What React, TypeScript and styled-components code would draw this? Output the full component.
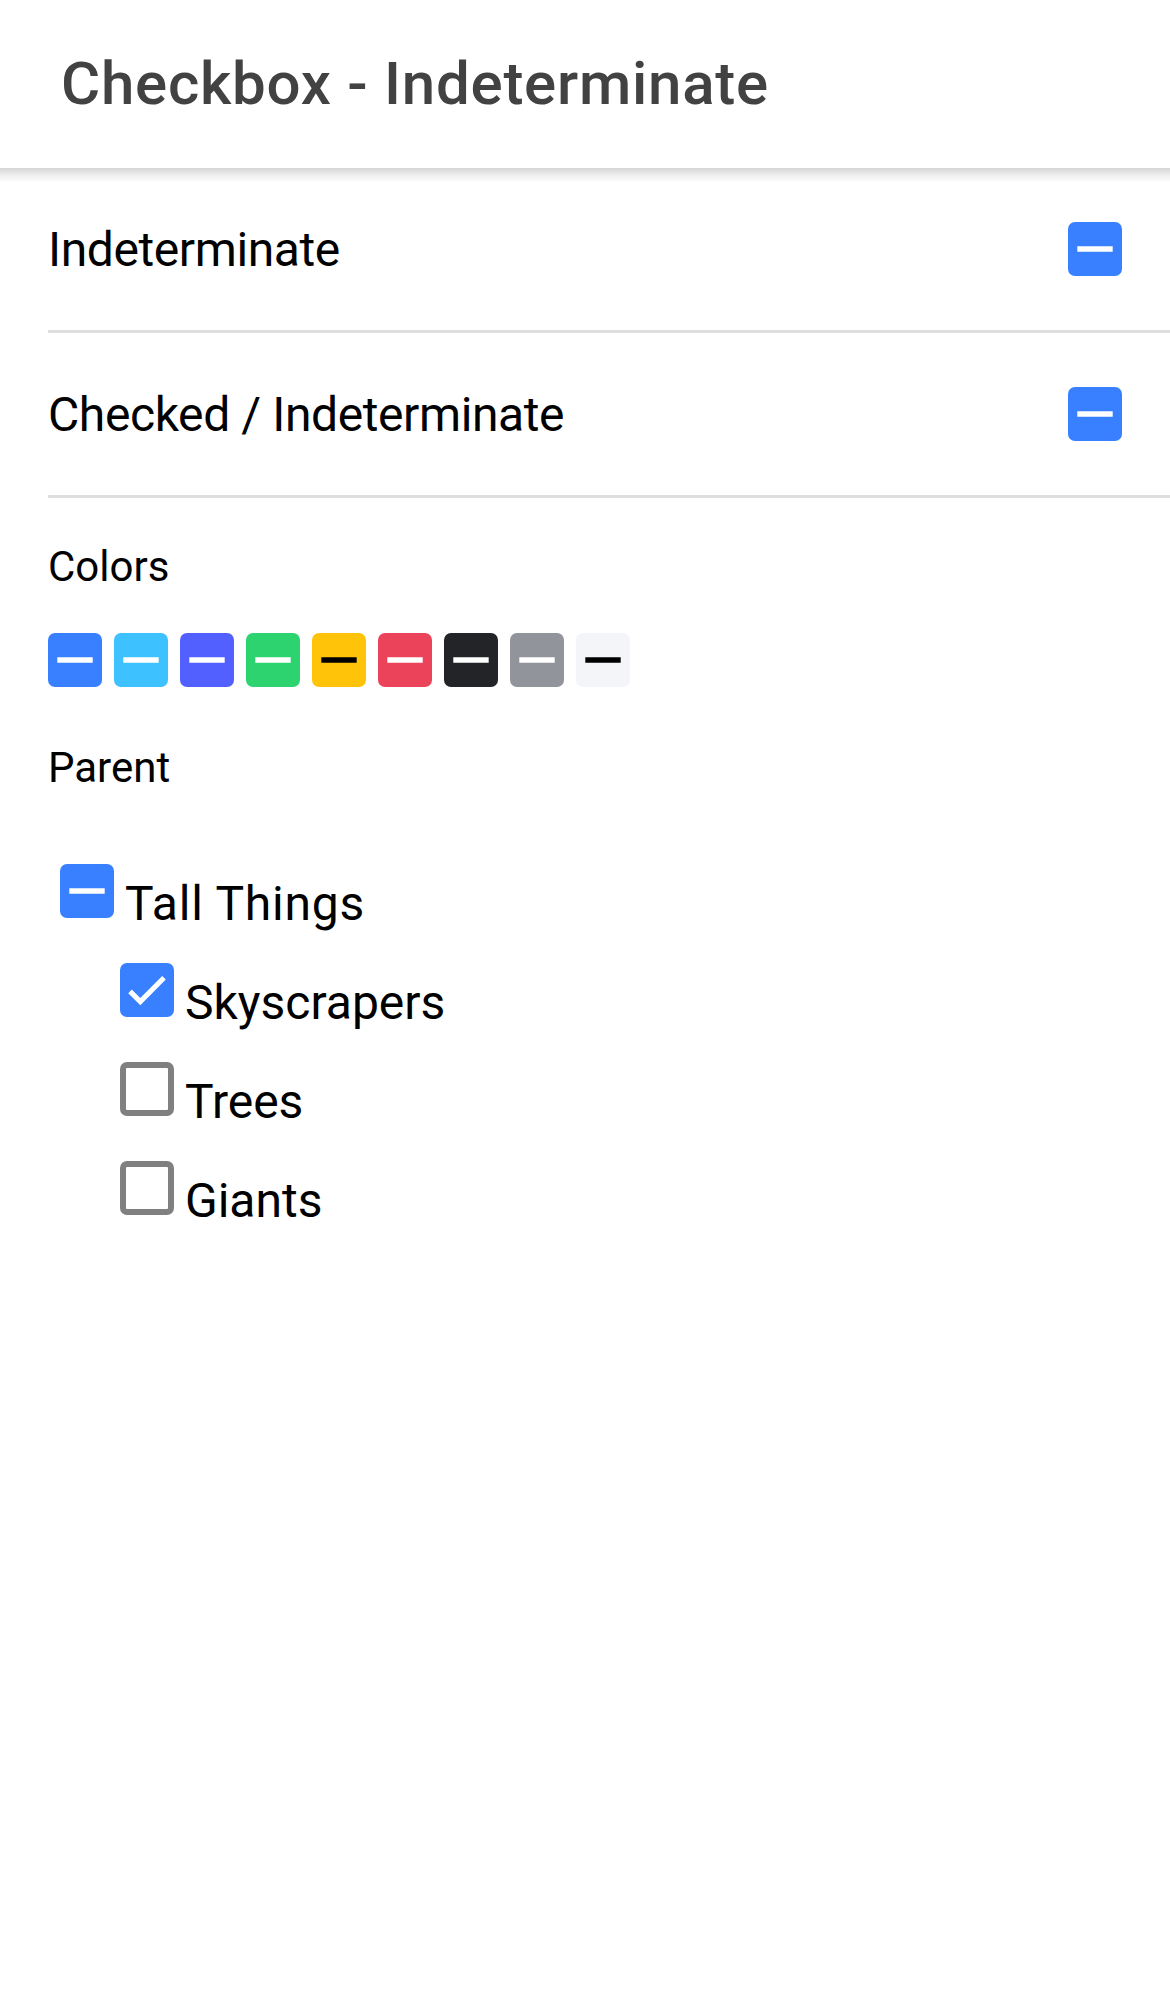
import React from 'react';
import styled, { createGlobalStyle } from 'styled-components';

const GlobalStyle = createGlobalStyle`
  html, body {
    margin: 0;
    padding: 0;
    background: #ffffff;
  }
  body {
    font-family: Roboto, "Noto Sans", "Liberation Sans", sans-serif;
    -webkit-font-smoothing: antialiased;
  }
`;

const Page = styled.div`
  display: flex;
  flex-direction: column;
  min-height: 1992px;
  background: #ffffff;
`;

const Header = styled.header`
  position: relative;
  z-index: 2;
  height: 168px;
  display: flex;
  align-items: center;
  background: #ffffff;

  &::after {
    content: '';
    position: absolute;
    left: 0;
    right: 0;
    top: 100%;
    height: 15px;
    background: linear-gradient(
      to bottom,
      rgba(0, 0, 0, 0.17) 0%,
      rgba(0, 0, 0, 0.07) 45%,
      rgba(0, 0, 0, 0) 100%
    );
  }
`;

const Title = styled.h1`
  margin: 0;
  padding-left: 61px;
  font-size: 60px;
  line-height: 1;
  font-weight: 500;
  letter-spacing: 0.0125em;
  color: #424242;
`;

const List = styled.div`
  display: flex;
  flex-direction: column;
`;

const Item = styled.div`
  box-sizing: border-box;
  height: 165px;
  margin-left: 48px;
  padding-right: 48px;
  display: flex;
  align-items: center;
  border-bottom: 3px solid #dedede;
`;

const ItemLabel = styled.span`
  flex: 1;
  font-size: 48px;
  letter-spacing: -0.4px;
  color: #000000;
`;

const Content = styled.div`
  display: flex;
  flex-direction: column;
  padding: 0 48px;
`;

const SectionLabel = styled.div<{ $gap: number }>`
  margin-top: ${(p) => p.$gap}px;
  font-size: 42px;
  line-height: 49px;
  color: #000000;
`;

const ColorRow = styled.div`
  display: flex;
  gap: 12px;
  margin-top: 42px;
`;

const Tree = styled.div`
  display: flex;
  flex-direction: column;
  gap: 31px;
  margin-top: 72px;
`;

const TreeRow = styled.div<{ $indent: number }>`
  display: flex;
  align-items: flex-start;
  padding-left: ${(p) => p.$indent}px;
`;

const TreeLabel = styled.span<{ $tracking?: number }>`
  margin-top: 12px;
  margin-left: 11px;
  font-size: 48px;
  line-height: 56px;
  letter-spacing: ${(p) => p.$tracking ?? 0}px;
  color: #000000;
`;

type Mode = 'indeterminate' | 'checked' | 'unchecked';

const Box = styled.span<{ $bg: string; $mode: Mode }>`
  box-sizing: border-box;
  flex: none;
  width: 54px;
  height: 54px;
  border-radius: 7px;
  display: block;
  background: ${(p) => (p.$mode === 'unchecked' ? '#ffffff' : p.$bg)};
  border: ${(p) => (p.$mode === 'unchecked' ? '6px solid #808080' : 'none')};
  overflow: hidden;
`;

const MarkSvg = styled.svg`
  display: block;
  width: 54px;
  height: 54px;
`;

const Checkbox: React.FC<{ color?: string; mark?: string; mode: Mode }> = ({
  color = '#3880ff',
  mark = '#ffffff',
  mode,
}) => (
  <Box $bg={color} $mode={mode}>
    {mode !== 'unchecked' && (
      <MarkSvg viewBox="0 0 54 54">
        {mode === 'indeterminate' ? (
          <line x1="9.3" y1="27" x2="44.7" y2="27" stroke={mark} strokeWidth="5.4" />
        ) : (
          <polyline
            points="10,28.4 20.3,38.6 44,14.8"
            fill="none"
            stroke={mark}
            strokeWidth="5"
          />
        )}
      </MarkSvg>
    )}
  </Box>
);

const colors: { bg: string; mark: string }[] = [
  { bg: '#3880ff', mark: '#ffffff' },
  { bg: '#3dc2ff', mark: '#ffffff' },
  { bg: '#5260ff', mark: '#ffffff' },
  { bg: '#2dd36f', mark: '#ffffff' },
  { bg: '#ffc409', mark: '#000000' },
  { bg: '#eb445a', mark: '#ffffff' },
  { bg: '#222428', mark: '#ffffff' },
  { bg: '#92949c', mark: '#ffffff' },
  { bg: '#f4f5f8', mark: '#000000' },
];

const children: { label: string; mode: Mode }[] = [
  { label: 'Skyscrapers', mode: 'checked' },
  { label: 'Trees', mode: 'unchecked' },
  { label: 'Giants', mode: 'unchecked' },
];

export default function App() {
  return (
    <Page>
      <GlobalStyle />
      <Header>
        <Title>Checkbox - Indeterminate</Title>
      </Header>
      <List>
        <Item>
          <ItemLabel>Indeterminate</ItemLabel>
          <Checkbox mode="indeterminate" />
        </Item>
        <Item>
          <ItemLabel>Checked / Indeterminate</ItemLabel>
          <Checkbox mode="indeterminate" />
        </Item>
      </List>
      <Content>
        <SectionLabel $gap={44}>Colors</SectionLabel>
        <ColorRow>
          {colors.map((c) => (
            <Checkbox key={c.bg} color={c.bg} mark={c.mark} mode="indeterminate" />
          ))}
        </ColorRow>
        <SectionLabel $gap={56}>Parent</SectionLabel>
        <Tree>
          <TreeRow $indent={12}>
            <Checkbox mode="indeterminate" />
            <TreeLabel $tracking={0.8}>Tall Things</TreeLabel>
          </TreeRow>
          {children.map((c) => (
            <TreeRow key={c.label} $indent={72}>
              <Checkbox mode={c.mode} />
              <TreeLabel>{c.label}</TreeLabel>
            </TreeRow>
          ))}
        </Tree>
      </Content>
    </Page>
  );
}
